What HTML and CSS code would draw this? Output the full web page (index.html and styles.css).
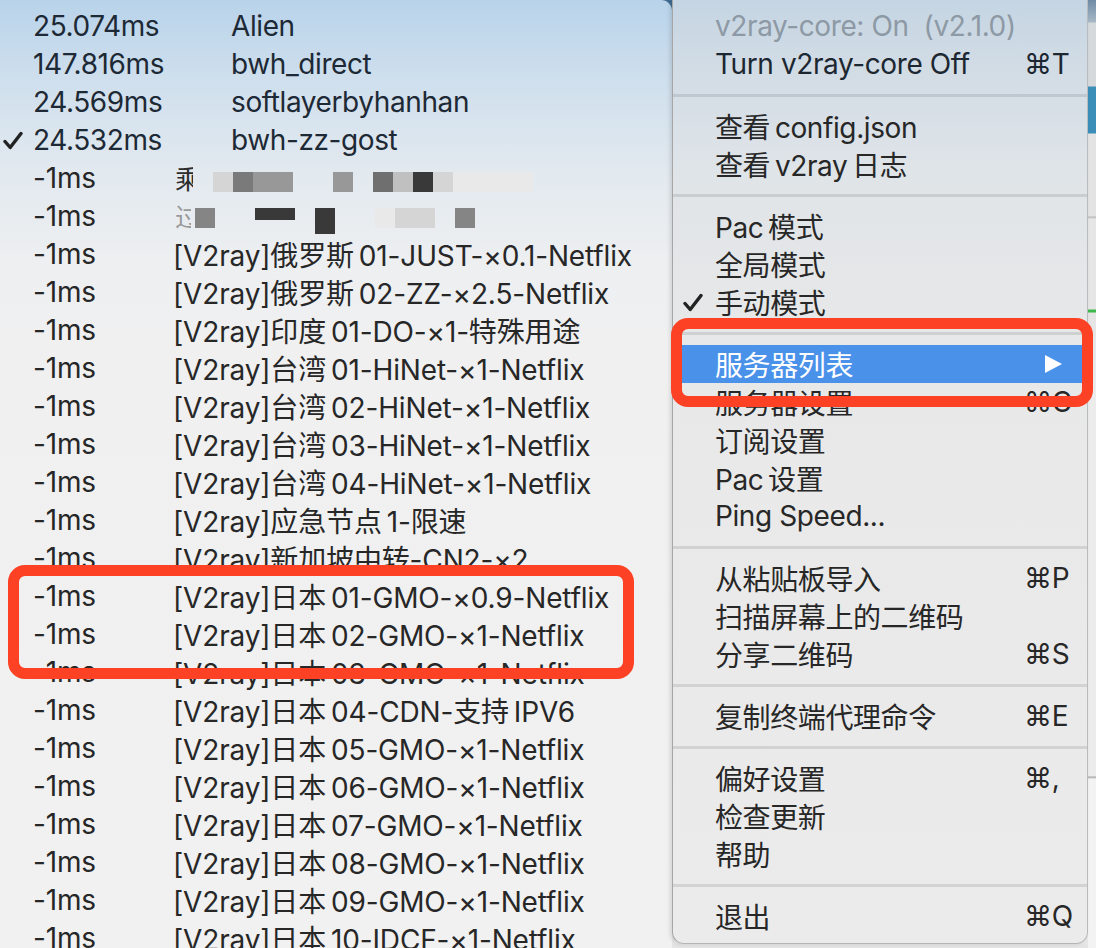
FILE: index.html
```html
<!DOCTYPE html>
<html lang="zh-CN">
<head>
<meta charset="utf-8">
<title>V2rayU menu</title>
<link rel="stylesheet" href="styles.css">
</head>
<body>
<div class="screen">
  <div class="servers">
    <div class="row top"><span class="chk"></span><span class="ms wide">25.074ms</span><span class="name">Alien</span></div>
    <div class="row top"><span class="chk"></span><span class="ms wide">147.816ms</span><span class="name">bwh_direct</span></div>
    <div class="row top"><span class="chk"></span><span class="ms wide">24.569ms</span><span class="name">softlayerbyhanhan</span></div>
    <div class="row top"><span class="chk"><svg class="check" viewBox="0 0 20 19"><path d="M2 10.5 L7.2 16.5 L18 2.5"/></svg></span><span class="ms wide">24.532ms</span><span class="name">bwh-zz-gost</span></div>
    <div class="row"><span class="chk"></span><span class="ms">-1ms</span>
      <span class="blur r5">
        <span class="glyph">乘</span>
        <span class="b c-l gap20"></span><span class="b c-m"></span><span class="b c-n"></span><span class="b c-n"></span>
        <span class="b c-n gap40"></span>
        <span class="b c-d gap20"></span><span class="b c-s"></span><span class="b c-k"></span><span class="b c-l"></span><span class="b c-f wide80"></span>
      </span>
    </div>
    <div class="row"><span class="chk"></span><span class="ms">-1ms</span>
      <span class="blur r6">
        <span class="glyph faint">过</span>
        <span class="b c-m2 gap4"></span>
        <span class="b c-k short wide40 gap40"></span>
        <span class="b c-k tall gap20"></span>
        <span class="b c-f gap40"></span><span class="b c-l wide40"></span>
        <span class="b c-m2 gap20"></span>
      </span>
    </div>
    <div class="row"><span class="chk"></span><span class="ms">-1ms</span><span class="name">[V2ray]俄罗斯&thinsp;01-JUST-×0.1-Netflix</span></div>
    <div class="row"><span class="chk"></span><span class="ms">-1ms</span><span class="name">[V2ray]俄罗斯&thinsp;02-ZZ-×2.5-Netflix</span></div>
    <div class="row"><span class="chk"></span><span class="ms">-1ms</span><span class="name">[V2ray]印度&thinsp;01-DO-×1-特殊用途</span></div>
    <div class="row"><span class="chk"></span><span class="ms">-1ms</span><span class="name">[V2ray]台湾&thinsp;01-HiNet-×1-Netflix</span></div>
    <div class="row"><span class="chk"></span><span class="ms">-1ms</span><span class="name">[V2ray]台湾&thinsp;02-HiNet-×1-Netflix</span></div>
    <div class="row"><span class="chk"></span><span class="ms">-1ms</span><span class="name">[V2ray]台湾&thinsp;03-HiNet-×1-Netflix</span></div>
    <div class="row"><span class="chk"></span><span class="ms">-1ms</span><span class="name">[V2ray]台湾&thinsp;04-HiNet-×1-Netflix</span></div>
    <div class="row"><span class="chk"></span><span class="ms">-1ms</span><span class="name">[V2ray]应急节点&thinsp;1-限速</span></div>
    <div class="row"><span class="chk"></span><span class="ms">-1ms</span><span class="name">[V2ray]新加坡中转-CN2-×2</span></div>
    <div class="row"><span class="chk"></span><span class="ms">-1ms</span><span class="name">[V2ray]日本&thinsp;01-GMO-×0.9-Netflix</span></div>
    <div class="row"><span class="chk"></span><span class="ms">-1ms</span><span class="name">[V2ray]日本&thinsp;02-GMO-×1-Netflix</span></div>
    <div class="row"><span class="chk"></span><span class="ms">-1ms</span><span class="name">[V2ray]日本&thinsp;03-GMO-×1-Netflix</span></div>
    <div class="row"><span class="chk"></span><span class="ms">-1ms</span><span class="name">[V2ray]日本&thinsp;04-CDN-支持&thinsp;IPV6</span></div>
    <div class="row"><span class="chk"></span><span class="ms">-1ms</span><span class="name">[V2ray]日本&thinsp;05-GMO-×1-Netflix</span></div>
    <div class="row"><span class="chk"></span><span class="ms">-1ms</span><span class="name">[V2ray]日本&thinsp;06-GMO-×1-Netflix</span></div>
    <div class="row"><span class="chk"></span><span class="ms">-1ms</span><span class="name">[V2ray]日本&thinsp;07-GMO-×1-Netflix</span></div>
    <div class="row"><span class="chk"></span><span class="ms">-1ms</span><span class="name">[V2ray]日本&thinsp;08-GMO-×1-Netflix</span></div>
    <div class="row"><span class="chk"></span><span class="ms">-1ms</span><span class="name">[V2ray]日本&thinsp;09-GMO-×1-Netflix</span></div>
    <div class="row"><span class="chk"></span><span class="ms">-1ms</span><span class="name">[V2ray]日本&thinsp;10-IDCF-×1-Netflix</span></div>
  </div>

  <div class="side">
    <div class="menu-col">
      <div class="menu">
        <div class="item disabled top"><span class="mchk"></span><span class="label">v2ray-core: On&nbsp; (v2.1.0)</span><span class="key"></span></div>
        <div class="item top"><span class="mchk"></span><span class="label">Turn v2ray-core Off</span><span class="key">⌘T</span></div>
        <div class="sep"></div>
        <div class="item"><span class="mchk"></span><span class="label">查看&thinsp;config.json</span><span class="key"></span></div>
        <div class="item"><span class="mchk"></span><span class="label">查看&thinsp;v2ray&thinsp;日志</span><span class="key"></span></div>
        <div class="sep"></div>
        <div class="item"><span class="mchk"></span><span class="label">Pac&thinsp;模式</span><span class="key"></span></div>
        <div class="item"><span class="mchk"></span><span class="label">全局模式</span><span class="key"></span></div>
        <div class="item"><span class="mchk"><svg class="check" viewBox="0 0 20 19"><path d="M2 10.5 L7.2 16.5 L18 2.5"/></svg></span><span class="label">手动模式</span><span class="key"></span></div>
        <div class="sep"></div>
        <div class="item active"><span class="mchk"></span><span class="label">服务器列表</span><span class="key"><svg class="arrow" viewBox="0 0 17 18"><polygon points="0,0 17,9 0,18"/></svg></span></div>
        <div class="item"><span class="mchk"></span><span class="label">服务器设置</span><span class="key">⌘C</span></div>
        <div class="item"><span class="mchk"></span><span class="label">订阅设置</span><span class="key"></span></div>
        <div class="item"><span class="mchk"></span><span class="label">Pac&thinsp;设置</span><span class="key"></span></div>
        <div class="item"><span class="mchk"></span><span class="label">Ping Speed...</span><span class="key"></span></div>
        <div class="sep"></div>
        <div class="item"><span class="mchk"></span><span class="label">从粘贴板导入</span><span class="key">⌘P</span></div>
        <div class="item"><span class="mchk"></span><span class="label">扫描屏幕上的二维码</span><span class="key"></span></div>
        <div class="item"><span class="mchk"></span><span class="label">分享二维码</span><span class="key">⌘S</span></div>
        <div class="sep"></div>
        <div class="item"><span class="mchk"></span><span class="label">复制终端代理命令</span><span class="key">⌘E</span></div>
        <div class="sep"></div>
        <div class="item"><span class="mchk"></span><span class="label">偏好设置</span><span class="key">⌘,</span></div>
        <div class="item"><span class="mchk"></span><span class="label">检查更新</span><span class="key"></span></div>
        <div class="item"><span class="mchk"></span><span class="label">帮助</span><span class="key"></span></div>
        <div class="sep"></div>
        <div class="item"><span class="mchk"></span><span class="label">退出</span><span class="key">⌘Q</span></div>
      </div>
      <div class="below"></div>
    </div>
    <div class="strip"></div>
  </div>

  <div class="mark mark-left"></div>
  <div class="mark mark-right"></div>
</div>
</body>
</html>
```

FILE: styles.css
```css
* { box-sizing: border-box; }

html, body {
  margin: 0;
  padding: 0;
}

body {
  width: 1096px;
  height: 948px;
  overflow: hidden;
  font-family: Inter, "Noto Sans CJK SC", "Noto Sans", sans-serif;
  font-size: 28px;
  letter-spacing: -0.4px;
}

.screen {
  position: relative;
  width: 1096px;
  height: 948px;
  display: flex;
  overflow: hidden;
  background: linear-gradient(180deg, #3f6a90 0, #5d83a4 30px, #e6e6e6 60px, #e6e6e6 100%);
}

/* ---------- left server submenu ---------- */
.servers {
  flex: none;
  width: 672px;
  height: 948px;
  padding-top: 7px;
  overflow: hidden;
  border-top-right-radius: 11px;
  background: linear-gradient(180deg, #b8d3ea 0, #cfdfed 80px, #e2e9ef 170px, #edeff1 260px, #f0f0f1 340px, #f1f1f1 100%);
  color: #272727;
  letter-spacing: -0.15px;
}

.row {
  display: flex;
  align-items: center;
  height: 38px;
  white-space: nowrap;
}

.row.top { color: #1d2935; letter-spacing: -0.4px; }

.chk {
  flex: none;
  width: 33px;
  height: 38px;
  display: flex;
  align-items: center;
  padding-left: 3px;
}

.check {
  width: 20px;
  height: 19px;
  fill: none;
  stroke: #222;
  stroke-width: 3.4;
  stroke-linecap: round;
  stroke-linejoin: round;
}

.ms {
  flex: none;
  width: 140px;
}

.ms.wide { width: 198px; }

.name { flex: none; }

/* pixelated (blurred) names */
.blur {
  display: flex;
  align-items: flex-start;
  height: 38px;
}

.blur.r5 { padding-top: 13px; }
.blur.r6 { padding-top: 11px; }

.glyph {
  flex: none;
  width: 18px;
  height: 26px;
  margin-left: 2px;
  margin-top: -5px;
  overflow: hidden;
  font-size: 26px;
  line-height: 26px;
  color: #2c2c2c;
}

.glyph.faint {
  color: #9a9a9a;
  width: 16px;
  margin-top: -3px;
}

.b {
  flex: none;
  display: block;
  width: 20px;
  height: 20px;
}

.b.short { height: 12px; }
.b.tall { height: 26px; }
.b.wide40 { width: 40px; }
.b.wide80 { width: 80px; }
.b.gap4 { margin-left: 4px; }
.b.gap20 { margin-left: 20px; }
.b.gap40 { margin-left: 40px; }

.c-l { background: #d5d5d5; }
.c-m { background: #7a7a7a; }
.c-m2 { background: #858585; }
.c-n { background: #989898; }
.c-d { background: #6f6f6f; }
.c-s { background: #c0c0c0; }
.c-k { background: #393939; }
.c-f { background: #e9e9e9; }

/* ---------- right main menu ---------- */
.side {
  flex: none;
  width: 424px;
  display: flex;
}

.menu-col {
  flex: none;
  width: 416px;
  display: flex;
  flex-direction: column;
}

.menu {
  height: 944px;
  padding: 7px 0 8px;
  border-left: 1px solid #a6a6a6;
  border-right: 1px solid #b9bcbf;
  border-bottom: 1px solid #b4b4b4;
  border-bottom-left-radius: 12px;
  border-bottom-right-radius: 12px;
  background: linear-gradient(180deg, #c5d5e3 0, #d2dce5 70px, #dfe4e8 170px, #e6e7e8 300px, #e9e9e9 450px, #ebebeb 100%);
  box-shadow: -2px 0 4px rgba(0, 0, 0, 0.12);
  color: #272727;
  position: relative;
  z-index: 1;
}

.below {
  flex: 1;
  background: #e4e4e4;
}

.item {
  display: flex;
  align-items: center;
  height: 38px;
  white-space: nowrap;
}

.item.top { color: #1c2731; }
.item.disabled { color: #8d99a4; }

.item.active {
  background: #4a91ea;
  color: #ffffff;
}

.mchk {
  flex: none;
  width: 42px;
  height: 38px;
  display: flex;
  align-items: center;
  padding-left: 10px;
}

.label {
  flex: 1;
}

.key {
  flex: none;
  width: 63px;
  display: flex;
  align-items: center;
}

.arrow {
  width: 17px;
  height: 18px;
  margin-left: 21px;
  fill: #ffffff;
}

.sep {
  height: 24px;
  background: linear-gradient(180deg, transparent 11px, rgba(0, 0, 0, 0.1) 11px, rgba(0, 0, 0, 0.1) 14px, transparent 14px);
}

.strip {
  flex: none;
  width: 8px;
  background: linear-gradient(180deg,
    #6f8ca6 0, #a7b8c6 22px, #d5d9dc 23px, #d5d9dc 86px,
    #3a8eb7 87px, #3a8eb7 133px, #e3e3e3 134px, #e3e3e3 216px,
    #b8b8b8 217px, #e6e6e6 219px, #e6e6e6 309px,
    #3db84b 310px, #3db84b 312px, #e4e4e4 313px,
    #ececec 400px, #ececec 776px, #a5a5a5 777px, #f3f3f3 779px, #f3f3f3 100%);
}

/* ---------- red annotation boxes ---------- */
.mark {
  position: absolute;
  border: 11px solid #fd4124;
  border-radius: 17px;
  z-index: 5;
}

.mark-left {
  left: 8px;
  top: 565px;
  width: 626px;
  height: 114px;
}

.mark-right {
  left: 671px;
  top: 318px;
  width: 422px;
  height: 89px;
}
```
